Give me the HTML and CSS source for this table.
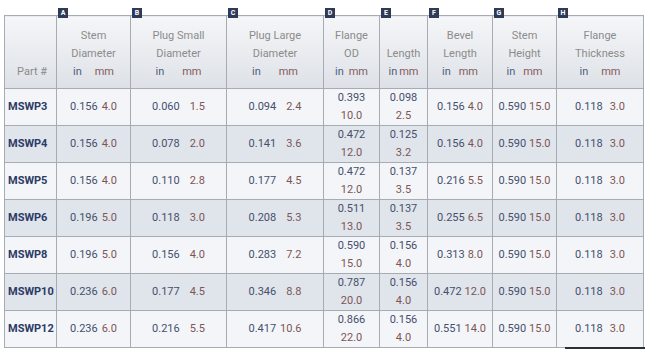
FILE: index.html
```html
<!DOCTYPE html>
<html lang="en">

<head>
    <meta charset="UTF-8">
    <title>MSWP Dimensions</title>
    <link rel="stylesheet" href="styles.css">
</head>

<body>

    <div class="wrap">
        <table class="specs">
            <colgroup>
                <col class="c-part">
                <col class="c-stem">
                <col class="c-small">
                <col class="c-large">
                <col class="c-od">
                <col class="c-len">
                <col class="c-bevel">
                <col class="c-height">
                <col class="c-thick">
            </colgroup>
            <thead>
                <tr>
                    <th class="part-head">Part #</th>
                    <th><span class="tag">A</span>Stem<br>Diameter<br><span class="in">in</span><span class="mm h-stem">mm</span></th>
                    <th><span class="tag">B</span>Plug Small<br>Diameter<br><span class="in">in</span><span class="mm h-plug">mm</span></th>
                    <th><span class="tag">C</span>Plug Large<br>Diameter<br><span class="in">in</span><span class="mm h-plug">mm</span></th>
                    <th><span class="tag">D</span>Flange<br>OD<br><span class="in">in</span><span class="mm h-od">mm</span></th>
                    <th><span class="tag">E</span>Length<br><span class="in">in</span><span class="mm h-len">mm</span></th>
                    <th><span class="tag">F</span>Bevel<br>Length<br><span class="in">in</span><span class="mm h-bevel">mm</span></th>
                    <th><span class="tag">G</span>Stem<br>Height<br><span class="in">in</span><span class="mm h-bevel">mm</span></th>
                    <th><span class="tag">H</span>Flange<br>Thickness<br><span class="in">in</span><span class="mm h-stem">mm</span></th>
                </tr>
            </thead>
            <tbody>
                <tr>
                    <td class="part">MSWP3</td>
                    <td><span class="in">0.156</span><span class="mm gap-s">4.0</span></td>
                    <td><span class="in">0.060</span><span class="mm gap-l">1.5</span></td>
                    <td><span class="in">0.094</span><span class="mm gap-l">2.4</span></td>
                    <td class="stack"><span class="in">0.393</span><span class="mm">10.0</span></td>
                    <td class="stack"><span class="in">0.098</span><span class="mm">2.5</span></td>
                    <td><span class="in">0.156</span><span class="mm gap-xs">4.0</span></td>
                    <td><span class="in">0.590</span><span class="mm gap-xs">15.0</span></td>
                    <td><span class="in">0.118</span><span class="mm gap-m">3.0</span></td>
                </tr>
                <tr>
                    <td class="part">MSWP4</td>
                    <td><span class="in">0.156</span><span class="mm gap-s">4.0</span></td>
                    <td><span class="in">0.078</span><span class="mm gap-l">2.0</span></td>
                    <td><span class="in">0.141</span><span class="mm gap-l">3.6</span></td>
                    <td class="stack"><span class="in">0.472</span><span class="mm">12.0</span></td>
                    <td class="stack"><span class="in">0.125</span><span class="mm">3.2</span></td>
                    <td><span class="in">0.156</span><span class="mm gap-xs">4.0</span></td>
                    <td><span class="in">0.590</span><span class="mm gap-xs">15.0</span></td>
                    <td><span class="in">0.118</span><span class="mm gap-m">3.0</span></td>
                </tr>
                <tr>
                    <td class="part">MSWP5</td>
                    <td><span class="in">0.156</span><span class="mm gap-s">4.0</span></td>
                    <td><span class="in">0.110</span><span class="mm gap-l">2.8</span></td>
                    <td><span class="in">0.177</span><span class="mm gap-l">4.5</span></td>
                    <td class="stack"><span class="in">0.472</span><span class="mm">12.0</span></td>
                    <td class="stack"><span class="in">0.137</span><span class="mm">3.5</span></td>
                    <td><span class="in">0.216</span><span class="mm gap-xs">5.5</span></td>
                    <td><span class="in">0.590</span><span class="mm gap-xs">15.0</span></td>
                    <td><span class="in">0.118</span><span class="mm gap-m">3.0</span></td>
                </tr>
                <tr>
                    <td class="part">MSWP6</td>
                    <td><span class="in">0.196</span><span class="mm gap-s">5.0</span></td>
                    <td><span class="in">0.118</span><span class="mm gap-l">3.0</span></td>
                    <td><span class="in">0.208</span><span class="mm gap-l">5.3</span></td>
                    <td class="stack"><span class="in">0.511</span><span class="mm">13.0</span></td>
                    <td class="stack"><span class="in">0.137</span><span class="mm">3.5</span></td>
                    <td><span class="in">0.255</span><span class="mm gap-xs">6.5</span></td>
                    <td><span class="in">0.590</span><span class="mm gap-xs">15.0</span></td>
                    <td><span class="in">0.118</span><span class="mm gap-m">3.0</span></td>
                </tr>
                <tr>
                    <td class="part">MSWP8</td>
                    <td><span class="in">0.196</span><span class="mm gap-s">5.0</span></td>
                    <td><span class="in">0.156</span><span class="mm gap-l">4.0</span></td>
                    <td><span class="in">0.283</span><span class="mm gap-l">7.2</span></td>
                    <td class="stack"><span class="in">0.590</span><span class="mm">15.0</span></td>
                    <td class="stack"><span class="in">0.156</span><span class="mm">4.0</span></td>
                    <td><span class="in">0.313</span><span class="mm gap-xs">8.0</span></td>
                    <td><span class="in">0.590</span><span class="mm gap-xs">15.0</span></td>
                    <td><span class="in">0.118</span><span class="mm gap-m">3.0</span></td>
                </tr>
                <tr>
                    <td class="part">MSWP10</td>
                    <td><span class="in">0.236</span><span class="mm gap-s">6.0</span></td>
                    <td><span class="in">0.177</span><span class="mm gap-l">4.5</span></td>
                    <td><span class="in">0.346</span><span class="mm gap-l">8.8</span></td>
                    <td class="stack"><span class="in">0.787</span><span class="mm">20.0</span></td>
                    <td class="stack"><span class="in">0.156</span><span class="mm">4.0</span></td>
                    <td><span class="in">0.472</span><span class="mm gap-xs">12.0</span></td>
                    <td><span class="in">0.590</span><span class="mm gap-xs">15.0</span></td>
                    <td><span class="in">0.118</span><span class="mm gap-m">3.0</span></td>
                </tr>
                <tr>
                    <td class="part">MSWP12</td>
                    <td><span class="in">0.236</span><span class="mm gap-s">6.0</span></td>
                    <td><span class="in">0.216</span><span class="mm gap-l">5.5</span></td>
                    <td><span class="in">0.417</span><span class="mm gap-s">10.6</span></td>
                    <td class="stack"><span class="in">0.866</span><span class="mm">22.0</span></td>
                    <td class="stack"><span class="in">0.156</span><span class="mm">4.0</span></td>
                    <td><span class="in">0.551</span><span class="mm gap-xs">14.0</span></td>
                    <td><span class="in">0.590</span><span class="mm gap-xs">15.0</span></td>
                    <td><span class="in">0.118</span><span class="mm gap-m">3.0</span></td>
                </tr>
            </tbody>
        </table>
        <div class="tip-edge"></div>
    </div>

</body>

</html>
```

FILE: styles.css
```css
:root {
    --borders-color: #a7abb2;
    --in-color: #44506d;
    --mm-color: #7c5656;
}

body {
    font-family: Roboto, 'Liberation Sans', Arial, sans-serif;
    font-size: 11px;
    margin: 0;
}

.wrap {
    box-sizing: border-box;
    height: 350px;
    overflow: hidden;
    padding: 15px 0 0 4px;
    position: relative;
}

/* ====== SPEC TABLE ====== */

.specs {
    border-collapse: collapse;
    table-layout: fixed;
    width: 640px;
}

.c-part { width: 52px; }
.c-stem { width: 74px; }
.c-small { width: 96px; }
.c-large { width: 97px; }
.c-od { width: 56px; }
.c-len { width: 48px; }
.c-bevel { width: 65px; }
.c-height { width: 64px; }
.c-thick { width: 87px; }

.specs th,
.specs td {
    border: 1px solid var(--borders-color);
    line-height: 18px;
    padding: 0;
    text-align: center;
    white-space: nowrap;
}

.specs th {
    background: linear-gradient(#f5f6f8, #dde1e7);
    color: #8b8b8b;
    font-weight: 400;
    height: 54px;
    padding: 11px 0 7px;
    position: relative;
    vertical-align: bottom;
}

.specs th.part-head {
    padding-right: 9px;
    text-align: right;
}

.specs td {
    background-color: #f4f5f8;
    height: 36px;
}

.specs tbody tr:nth-child(even) td {
    background-color: #e0e4eb;
}

td.part {
    color: #2c3b66;
    font-weight: 700;
    padding-left: 3px;
    text-align: left;
}

.in {
    color: var(--in-color);
}

.mm {
    color: var(--mm-color);
}

th .in {
    color: #4f5f80;
}

th .mm {
    color: #865c5c;
}

/* gaps between the inch and mm figures */
.gap-xs { margin-left: 3px; }
.gap-s { margin-left: 4px; }
.gap-m { margin-left: 7px; }
.gap-l { margin-left: 10px; }

.h-len { margin-left: 2px; }
.h-od { margin-left: 5px; }
.h-bevel { margin-left: 8px; }
.h-stem { margin-left: 13px; }
.h-plug { margin-left: 18px; }

td.stack span {
    display: block;
}

.tag {
    background-color: #2f3a58;
    color: white;
    font-size: 7px;
    font-weight: 700;
    height: 10px;
    left: 1px;
    line-height: 10px;
    position: absolute;
    text-align: center;
    top: -8px;
    width: 10px;
}

/* edge of a dark popup peeking in at the bottom */
.tip-edge {
    background-color: #2b2f38;
    bottom: 1px;
    height: 2px;
    left: 565px;
    position: absolute;
    right: 0;
}
```
